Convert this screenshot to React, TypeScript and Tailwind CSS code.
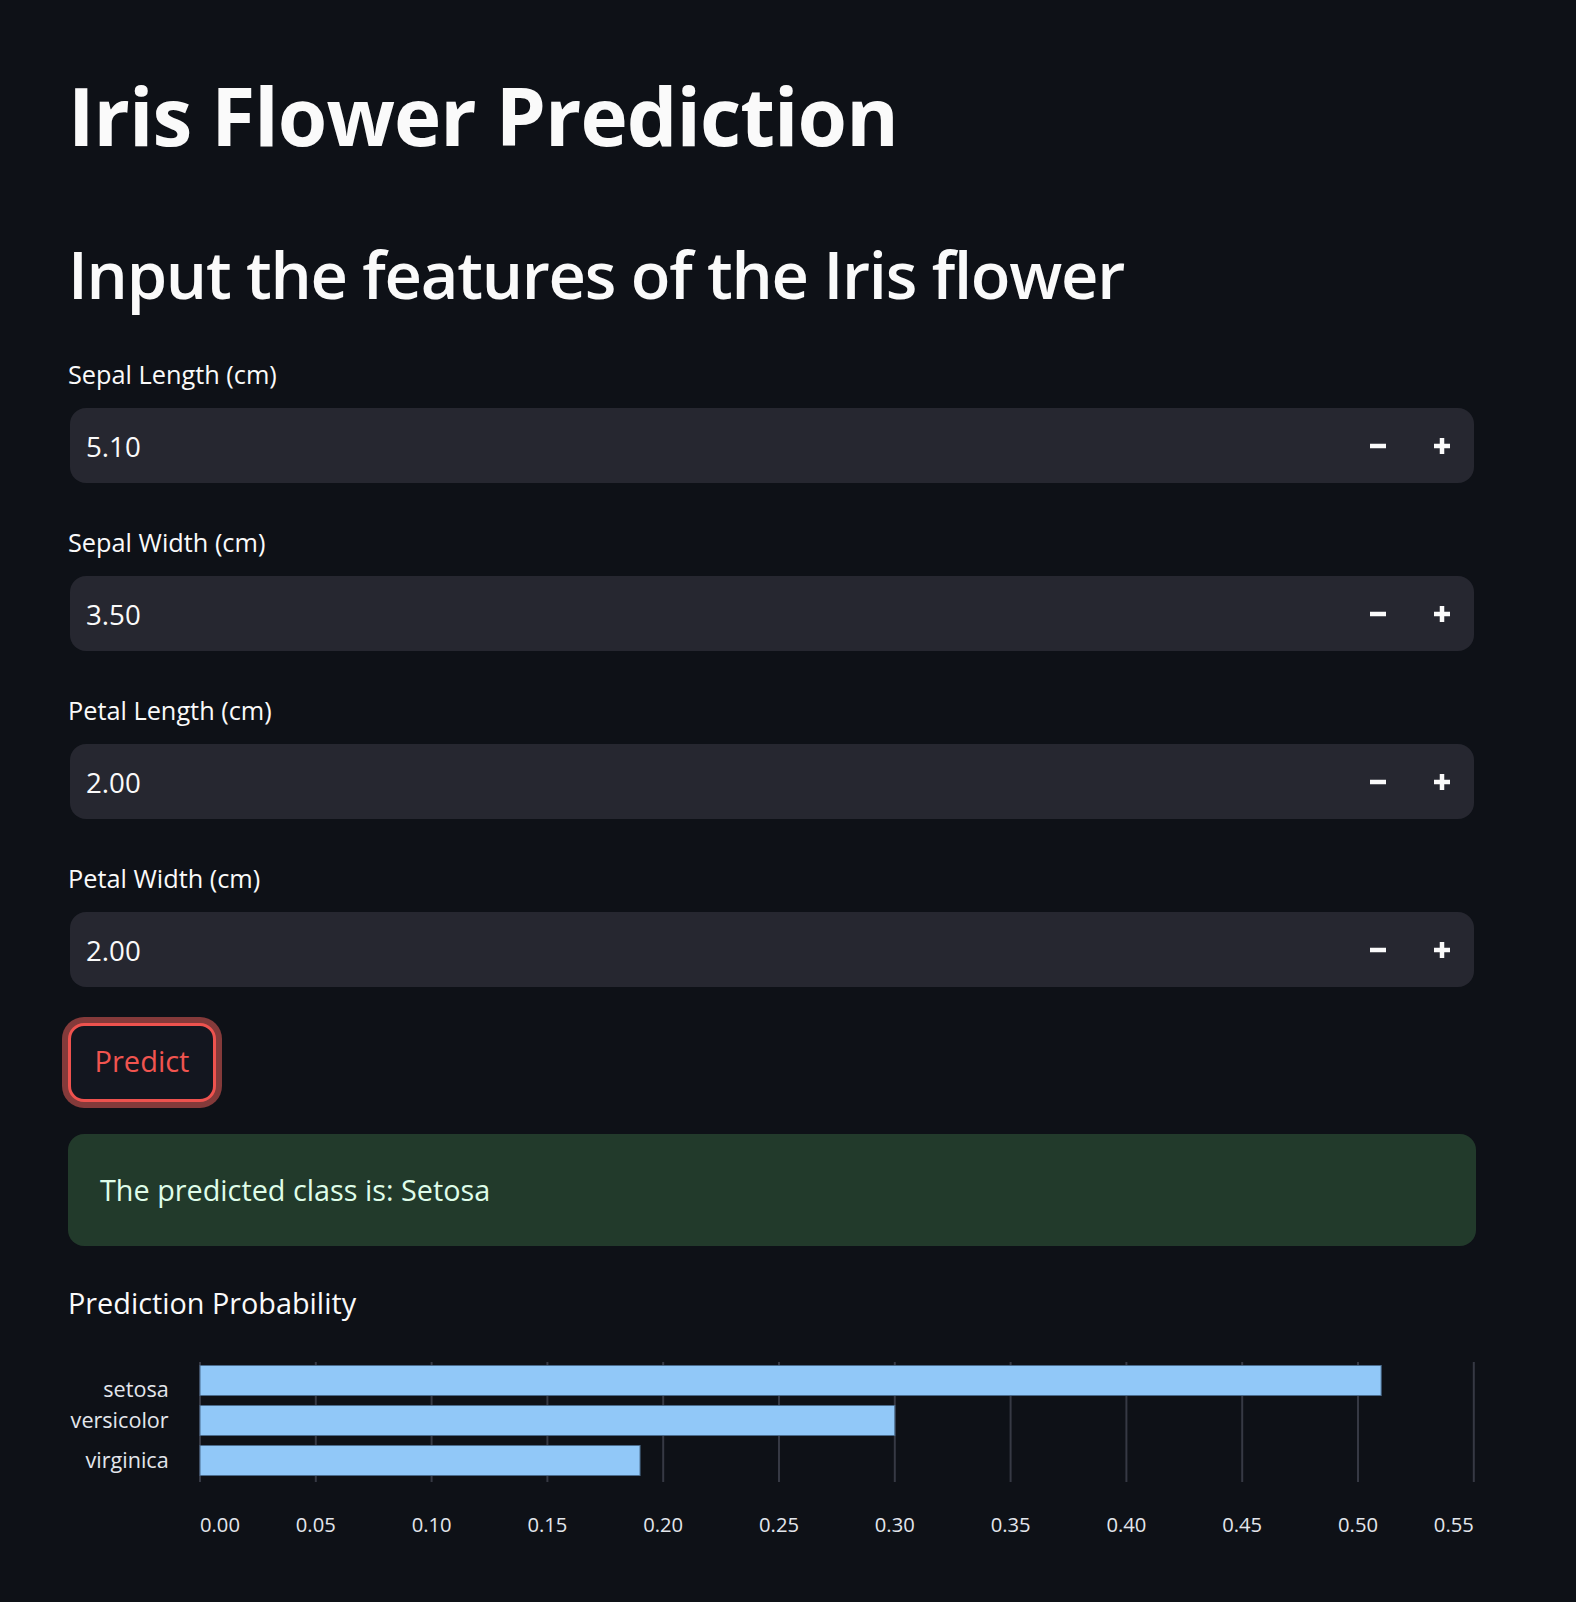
import React from "react";

const FONT = { fontFamily: '"Open Sans", "Noto Sans", sans-serif' };

function MinusIcon() {
  return (
    <svg width="16" height="16" viewBox="0 0 16 16" aria-hidden="true">
      <rect x="0" y="5.75" width="16" height="4.5" fill="#fafafa" />
    </svg>
  );
}

function PlusIcon() {
  return (
    <svg width="16" height="16" viewBox="0 0 16 16" aria-hidden="true">
      <rect x="0" y="5.75" width="16" height="4.5" fill="#fafafa" />
      <rect x="5.75" y="0" width="4.5" height="16" fill="#fafafa" />
    </svg>
  );
}

function NumberField({ label, value, first }: { label: string; value: string; first?: boolean }) {
  return (
    <div className={first ? "mt-[42px]" : "mt-[41px]"}>
      <div className="text-[25.3px] leading-[36px] text-[#fafafa]">{label}</div>
      <div className="mt-[16px] mx-[2px] h-[75px] rounded-[16px] bg-[#262730] flex items-center">
        <div className="flex-1 pl-[16px] text-[27.7px] leading-[36px] text-[#fafafa]">{value}</div>
        <div className="w-[64px] h-full flex items-center justify-center">
          <MinusIcon />
        </div>
        <div className="w-[64px] h-full flex items-center justify-center">
          <PlusIcon />
        </div>
      </div>
    </div>
  );
}

function Chart() {
  const x0 = 132;
  const step = 115.8;
  const ticks = Array.from({ length: 12 }, (_, k) => k);
  const scale = step / 0.05;
  const bars = [
    { name: "setosa", v: 0.51, y: 35.5, ly: 66.7 },
    { name: "versicolor", v: 0.3, y: 75.5, ly: 98.3 },
    { name: "virginica", v: 0.19, y: 115.5, ly: 138 },
  ];
  return (
    <svg width="1408" height="230" viewBox="0 0 1408 230" overflow="visible" className="block mt-[7px]" style={FONT}>
      {ticks.map((k) => (
        <line key={k} x1={x0 + step * k} x2={x0 + step * k} y1={32} y2={152} stroke="#363944" strokeWidth={2} />
      ))}
      {bars.map((b) => (
        <rect key={b.name} x={x0} y={b.y} width={b.v * scale} height={30} fill="#91c8f8" stroke="#4a6b8c" strokeWidth={1} />
      ))}
      {bars.map((b) => (
        <text key={b.name + "l"} x={100.7} y={b.ly} textAnchor="end" fontSize={21.6} fill="#e3e6ec">
          {b.name}
        </text>
      ))}
      {ticks.map((k) => {
        const label = (k * 0.05).toFixed(2);
        const anchor = k === 0 ? "start" : k === 11 ? "end" : "middle";
        return (
          <text key={"t" + k} x={x0 + step * k} y={201.7} textAnchor={anchor} fontSize={20.2} fill="#e3e6ec">
            {label}
          </text>
        );
      })}
    </svg>
  );
}

export default function App() {
  return (
    <div className="min-h-[1602px] w-full bg-[#0e1117] text-[#fafafa]" style={FONT}>
      <div className="ml-[68px] w-[1408px] pt-[65px] pb-[40px]">
        <h1 className="text-[80px] leading-[100px] font-bold tracking-[-0.9px] text-[#fafafa]">Iris Flower Prediction</h1>
        <h2 className="mt-[69px] text-[65px] leading-[80px] font-semibold tracking-[-1.25px] text-[#fafafa]">
          Input the features of the Iris flower
        </h2>
        <NumberField label="Sepal Length (cm)" value="5.10" first />
        <NumberField label="Sepal Width (cm)" value="3.50" />
        <NumberField label="Petal Length (cm)" value="2.00" />
        <NumberField label="Petal Width (cm)" value="2.00" />
        <button
          type="button"
          className="mt-[36px] block w-[148px] h-[79px] pb-[4px] rounded-[16px] border-[3px] border-[#ee524e] bg-[#13161f] text-[29px] leading-[36px] text-[#f0544f] shadow-[0_0_0_6px_#843a3a]"
          style={FONT}
        >
          Predict
        </button>
        <div className="mt-[32px] h-[112px] rounded-[16px] bg-[#223a2b] flex items-center pl-[32px]">
          <span className="text-[28.8px] leading-[40px] text-[#dffde9]">The predicted class is: Setosa</span>
        </div>
        <div className="mt-[37px] text-[28.8px] leading-[40px] text-[#fafafa]">Prediction Probability</div>
        <Chart />
      </div>
    </div>
  );
}
